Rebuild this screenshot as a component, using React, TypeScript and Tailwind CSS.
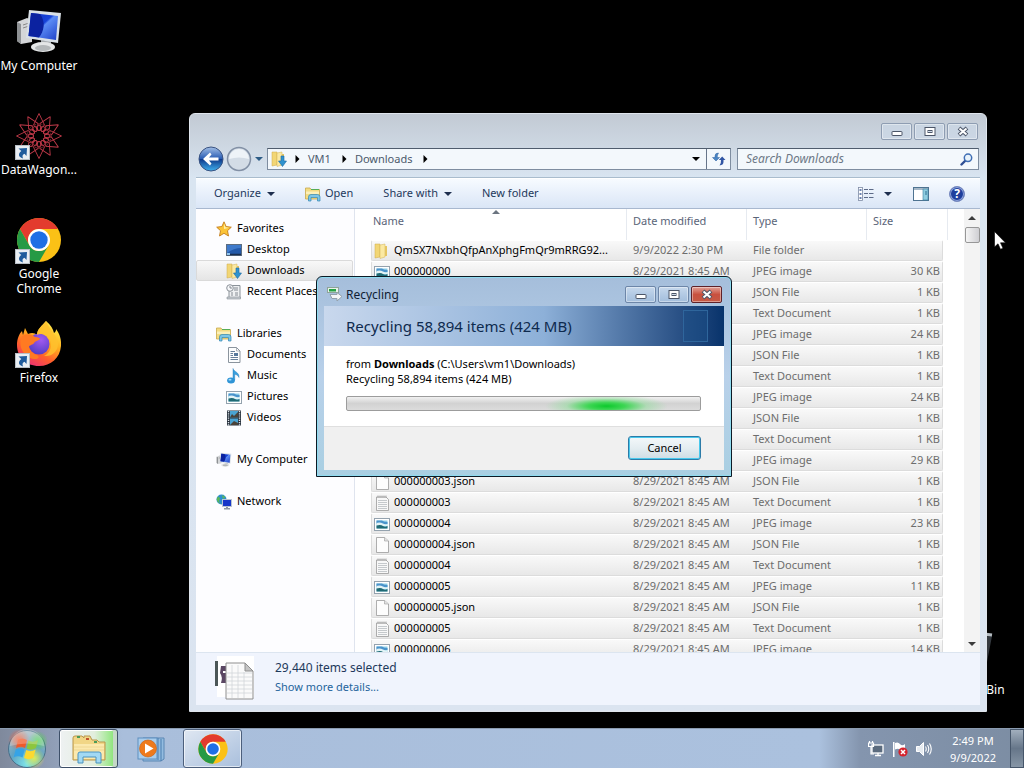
import { useState } from "react";
import type { ReactNode } from "react";

type FileKind = "folder" | "image" | "json" | "text";

interface FileItem {
  name: string;
  modified: string;
  kind: FileKind;
  size: string;
}

const KIND_LABEL: Record<FileKind, string> = {
  folder: "File folder",
  image: "JPEG image",
  json: "JSON File",
  text: "Text Document",
};

// Every photo comes with a .json and a .txt next to it
const IMAGE_SIZES = [30, 24, 24, 29, 23, 11, 14];

const FILES: FileItem[] = [
  { name: "QmSX7NxbhQfpAnXphgFmQr9mRRG92...", modified: "9/9/2022 2:30 PM", kind: "folder", size: "" },
  ...IMAGE_SIZES.flatMap((kb, index): FileItem[] => {
    const name = String(index).padStart(9, "0");
    const modified = "8/29/2021 8:45 AM";
    return [
      { name, modified, kind: "image", size: `${kb} KB` },
      { name: `${name}.json`, modified, kind: "json", size: "1 KB" },
      { name, modified, kind: "text", size: "1 KB" },
    ];
  }),
];

/* ---------- Icons ---------- */

function ComputerIcon({ className }: { className: string }) {
  return (
    <svg viewBox="0 0 48 48" className={className} aria-hidden="true">
      <defs>
        <linearGradient id="screen" x1="0" y1="0" x2="1" y2="1">
          <stop offset="0" stopColor="#0a2fc4" />
          <stop offset="0.45" stopColor="#1743d8" />
          <stop offset="0.5" stopColor="#5b8cf5" />
          <stop offset="1" stopColor="#1d3fc8" />
        </linearGradient>
      </defs>
      <path d="M2 14 12 10 17 12V34L6 36 2 33Z" fill="#d4d6d8" />
      <path d="M2 14 6 16V36L2 33Z" fill="#8e9194" />
      <path d="M8 17 14 15M8 20 14 18" stroke="#888" />
      <path d="M26 32 36 33V40H26Z" fill="#a9adb0" />
      <ellipse cx="28" cy="39" rx="12" ry="5" fill="#e4e6e7" />
      <ellipse cx="28" cy="40" rx="8" ry="3" fill="#b4b8ba" />
      <path d="M14 2 46 5 43 35 11 30Z" fill="#d9e0e6" />
      <path d="M16 5 43 8 41 32 13.500 28Z" fill="url(#screen)" />
      <path d="M16 5 25 6C31 14 29 23 24 29.500L13.500 28Z" fill="#0b22a0" />
    </svg>
  );
}

function ShortcutBadge() {
  return (
    <svg viewBox="0 0 15 15" className="absolute bottom-0 left-0 h-[15px] w-[15px]" aria-hidden="true">
      <rect x="0.500" y="0.500" width="14" height="14" fill="#e9eef3" stroke="#b8bfc6" />
      <path d="M3.500 3.500 12 3 11.500 11 9.500 8.700C7.500 9.500 7 11 8 13.500 3 12 3 8.500 6.300 6Z" fill="#1f5b9c" />
    </svg>
  );
}

function DataWagonIcon() {
  return (
    <svg viewBox="0 0 48 48" className="h-12 w-12" fill="none" stroke="#c23a4a" aria-hidden="true">
      {[0, 30, 60, 90, 120, 150, 180, 210, 240, 270, 300, 330].map((angle) => (
        <g key={angle} transform={`rotate(${angle} 24 24)`}>
          <path d="M24 1.500 29.500 13M24 1.500 18.500 13" strokeWidth="0.900" />
          <path d="M18.500 13 24 19 29.500 13" strokeWidth="0.700" />
          <circle cx="24" cy="16" r="2.600" strokeWidth="0.800" />
        </g>
      ))}
      <circle cx="24" cy="24" r="12" strokeWidth="0.600" strokeDasharray="2 1" />
    </svg>
  );
}

function ChromeIcon({ className }: { className: string }) {
  return (
    <svg viewBox="0 0 48 48" className={className} aria-hidden="true">
      <circle cx="24" cy="24" r="22" fill="#fbc116" />
      <path d="M4.950 13A22 22 0 0 1 43.050 13H24A11 11 0 0 0 14.470 29.500Z" fill="#e33b2e" />
      <path d="M4.950 13A22 22 0 0 0 24 46L33.530 29.500A11 11 0 0 1 14.470 29.500Z" fill="#269a45" />
      <circle cx="24" cy="24" r="11" fill="#fff" />
      <circle cx="24" cy="24" r="8.700" fill="#1f6fe5" />
    </svg>
  );
}

function FirefoxIcon() {
  return (
    <svg viewBox="0 0 48 48" className="h-12 w-12" aria-hidden="true">
      <defs>
        <linearGradient id="fox" x1="0.800" y1="0" x2="0.250" y2="1">
          <stop offset="0" stopColor="#fff04f" />
          <stop offset="0.400" stopColor="#ffb01f" />
          <stop offset="0.700" stopColor="#ff5e2c" />
          <stop offset="1" stopColor="#ec2c7c" />
        </linearGradient>
        <radialGradient id="globe" cx="0.600" cy="0.300" r="0.800">
          <stop offset="0" stopColor="#a259f0" />
          <stop offset="1" stopColor="#4a3bc0" />
        </radialGradient>
      </defs>
      <path
        d="M31 1C36 5 38 9 39 13 41 12 41 10 41 9 45 14 46.500 20 46 26 45 38 36 46 24 46 11 46 2 37 2 25 2 19 4 14 7 11L8 15 10 8 13 14C17 12 20 13 22 15 22 9 27 6 31 1Z"
        fill="url(#fox)"
      />
      <circle cx="24" cy="24" r="10.500" fill="url(#globe)" />
      <path d="M7 16C11 13 17 14 20 17 23 17 25 18 25 19 23 21 20 21 19 23 18 25 14 25 14 27 15 31 18 34 22 35 27 38 20 42 12 36 5 31 4 22 7 16Z" fill="#ff7a22" />
      <path d="M22 15C29 12 36 17 36 25 36 30 33 34 29 36 37 37 43 31 43 24 43 17 36 12 31 1 27 6 22 9 22 15Z" fill="#ffc12e" opacity="0.850" />
    </svg>
  );
}

function RecycleBinIcon() {
  return (
    <svg viewBox="0 0 48 48" className="h-12 w-12" aria-hidden="true">
      <path d="M5 5 43 4 38 30 36 44 12 46Z" fill="#59616a" opacity="0.600" />
      <path d="M5 4Q24 0 43 3" fill="none" stroke="#b6bdc3" strokeWidth="3" />
    </svg>
  );
}

function FolderIcon({ arrow = false }: { arrow?: boolean }) {
  return (
    <svg viewBox="0 0 16 16" className="h-4 w-4 shrink-0" aria-hidden="true">
      <path d="M1 1H6V14L1 15Z" fill="#f2d675" stroke="#cda84a" strokeWidth="0.500" />
      <path d="M6 2 11 1V14L6 15.500Z" fill="#fbe9a2" stroke="#d3b255" strokeWidth="0.500" />
      <path d="M11 3H13V13H11Z" fill="#e5c562" />
      {arrow && <path d="M10 5H13V10H15.500L11.500 15.500 7.500 10H10Z" fill="#2f93cf" stroke="#1b6aa3" strokeWidth="0.600" />}
    </svg>
  );
}

function LibraryIcon() {
  return (
    <svg viewBox="0 0 16 16" className="h-4 w-4 shrink-0" aria-hidden="true">
      <path d="M0.500 13V2H5L6 3.500H14.500V13Z" fill="#f3dc83" stroke="#c9a94d" strokeWidth="0.800" />
      <path d="M1 5.500H14V8H1Z" fill="#fbf0b9" />
      <path d="M6 3.500H14" stroke="#57ad55" />
      <path d="M3.500 15V11Q3.500 8.500 6 8.500H12.500Q15 8.500 15 11V15H12.500V11.500H6V15Z" fill="#7ec6e6" stroke="#3187b5" strokeWidth="0.700" />
    </svg>
  );
}

function ImageIcon() {
  return (
    <svg viewBox="0 0 16 16" className="h-4 w-4 shrink-0" aria-hidden="true">
      <rect x="0.500" y="2.500" width="15" height="12" fill="#fff" stroke="#94a2ae" />
      <rect x="2.500" y="4.500" width="11" height="8" fill="#8fd0e8" />
      <path d="M2.500 4.500H8Q10 6 13.500 6V8H2.500Z" fill="#4a93cb" />
      <path d="M2.500 7Q6 6 9 7.500T13.500 8V10H2.500Z" fill="#e2f3f6" />
      <path d="M2.500 9.500Q7 8.500 9 10T13.500 10V12.500H2.500Z" fill="#1f6a74" />
    </svg>
  );
}

function PageIcon() {
  return (
    <svg viewBox="0 0 16 16" className="h-4 w-4 shrink-0" aria-hidden="true">
      <path d="M2.500 0.500H10.500L14.500 4V15.500H2.500Z" fill="#fdfdfd" stroke="#9a9a9a" strokeWidth="0.800" />
      <path d="M10.500 0.500V4H14.500" fill="#e3e3e3" stroke="#9a9a9a" strokeWidth="0.600" />
    </svg>
  );
}

function NotepadIcon() {
  return (
    <svg viewBox="0 0 16 16" className="h-4 w-4 shrink-0" aria-hidden="true">
      <path d="M2.500 2H12L14.500 4.500V15.500H2.500Z" fill="#f8f8f8" stroke="#9a9a9a" strokeWidth="0.800" />
      <path d="M4 0.500V3M6 0.500V3M8 0.500V3M10 0.500V3M12 0.500V3" stroke="#9a9a9a" strokeWidth="0.800" />
      <path d="M4 5.500H13M4 7.500H13M4 9.500H13M4 11.500H13M4 13.500H13" stroke="#b7bdc0" strokeWidth="0.800" />
    </svg>
  );
}

function StarIcon() {
  return (
    <svg viewBox="0 0 16 16" className="h-4 w-4 shrink-0" aria-hidden="true">
      <path d="M8 0.800 10.100 5.500 15.300 6.200 11.500 9.700 12.500 15 8 12.300 3.500 15 4.500 9.700 0.700 6.200 5.900 5.500Z" fill="#fbc437" stroke="#c47d1c" strokeWidth="0.900" />
      <path d="M8 2.500 9.400 6.300 13 6.800 8 8Z" fill="#fff1a8" />
    </svg>
  );
}

function DesktopIconSmall() {
  return (
    <svg viewBox="0 0 16 16" className="h-4 w-4 shrink-0" aria-hidden="true">
      <rect x="0.500" y="2.500" width="15" height="11" fill="#2459a8" stroke="#5d6d80" />
      <path d="M1 3H15V6Q8 6 1 11Z" fill="#3f7acb" />
      <path d="M1 12.500H15" stroke="#1b2f4f" strokeWidth="1.500" />
      <path d="M1 11H4V13H1Z" fill="#8fc4ee" />
    </svg>
  );
}

function RecentIcon() {
  return (
    <svg viewBox="0 0 16 16" className="h-4 w-4 shrink-0" aria-hidden="true">
      <path d="M5 1.500H14V14H3V7" fill="#eef0f2" stroke="#8b9299" />
      <circle cx="4" cy="4" r="3.300" fill="#f7f8fa" stroke="#8b9299" />
      <path d="M4 2V4H6M8 4H12M8 6H12M5 9H7M9 9H12M5 11H7M9 11H12" stroke="#788089" strokeWidth="0.900" fill="none" />
      <path d="M1 13H14.500V15H1Z" fill="#c5cad0" stroke="#8b9299" strokeWidth="0.600" />
    </svg>
  );
}

function DocumentIcon() {
  return (
    <svg viewBox="0 0 16 16" className="h-4 w-4 shrink-0" aria-hidden="true">
      <path d="M2.500 0.500H10.500L14 4V15.500H2.500Z" fill="#fcfdfe" stroke="#8b949e" />
      <path d="M10.500 0.500V4H14" fill="none" stroke="#8b949e" strokeWidth="0.700" />
      <path d="M4.500 4.500H9M4.500 6.500H7M4.500 8.500H7M4.500 10.500H12M4.500 12.500H12" stroke="#55708f" strokeWidth="0.900" />
      <rect x="8" y="6" width="4" height="3" fill="#56789c" />
    </svg>
  );
}

function MusicIcon() {
  return (
    <svg viewBox="0 0 16 16" className="h-4 w-4 shrink-0" aria-hidden="true">
      <path d="M7 0.500C8 4 13.500 4 13 9.500 12 7 10 6.500 8.700 6.500V12H7Z" fill="#3ba0de" stroke="#1c74b4" strokeWidth="0.400" />
      <ellipse cx="5" cy="12.500" rx="3.900" ry="2.900" fill="#2f94d6" />
      <ellipse cx="4" cy="11.700" rx="1.500" ry="0.900" fill="#a6dbf8" />
    </svg>
  );
}

function VideoIcon() {
  return (
    <svg viewBox="0 0 16 16" className="h-4 w-4 shrink-0" aria-hidden="true">
      <rect x="1" y="0.500" width="14" height="15" fill="#26303c" />
      <path d="M2.500 1V15.500M13.500 1V15.500" stroke="#dfe6ec" strokeWidth="1.400" strokeDasharray="1.200 1" />
      <rect x="4" y="1" width="8" height="6.500" fill="#4aa3d2" />
      <rect x="4" y="8.500" width="8" height="6.500" fill="#4aa3d2" />
      <path d="M4 7.500 6 4 8 6 12 2V7.500ZM4 15 8 11 12 13V15Z" fill="#4a4238" />
    </svg>
  );
}

function NetworkIcon() {
  return (
    <svg viewBox="0 0 16 16" className="h-4 w-4 shrink-0" aria-hidden="true">
      <circle cx="5.500" cy="5.500" r="5" fill="#2f8fce" />
      <path d="M2 2.500Q5 4 3.500 6T5.500 10Q1 9 0.700 5ZM6 1 9.500 3 7 5Z" fill="#59b85a" />
      <rect x="6.500" y="5.500" width="9" height="7" fill="#1737c9" stroke="#b9c4d2" />
      <path d="M10 13H12V14H14V15.500H8V14H10Z" fill="#8e99a6" />
    </svg>
  );
}

function CaretDown({ className = "fill-[#1e2f4f]" }: { className?: string }) {
  return (
    <svg viewBox="0 0 8 4" className={`h-1 w-2 shrink-0 ${className}`} aria-hidden="true">
      <path d="M0 0H8L4 4Z" />
    </svg>
  );
}

function CaretRight() {
  return (
    <svg viewBox="0 0 5 8" className="h-2 w-[5px] shrink-0 fill-black" aria-hidden="true">
      <path d="M0.500 0V8L4.500 4Z" />
    </svg>
  );
}

function FileKindIcon({ kind }: { kind: FileKind }) {
  if (kind === "folder") return <FolderIcon />;
  if (kind === "image") return <ImageIcon />;
  if (kind === "json") return <PageIcon />;
  return <NotepadIcon />;
}

/* ---------- Shared window parts ---------- */

function WindowControls({ active = false }: { active?: boolean }) {
  const base = "flex h-[17px] w-[31px] items-center justify-center rounded-xs border shadow-[inset_0_0_0_1px_rgba(255,255,255,0.4)]";
  const plain = active
    ? "border-[#6d86a8] bg-linear-to-b from-[#c6d8ec] via-[#b3cae4] via-50% to-[#a3bedc]"
    : "border-[#8e9db2] bg-[#ccd9e8]/60";
  return (
    <div className="flex gap-[2px]">
      <button type="button" aria-label="Minimize" className={`${base} ${plain}`}>
        <svg viewBox="0 0 12 11" className="h-[11px] w-3" aria-hidden="true">
          <rect x="1" y="5.500" width="10" height="4" rx="0.500" fill="#fff" stroke="#4c5668" />
        </svg>
      </button>
      <button type="button" aria-label="Maximize" className={`${base} ${plain}`}>
        <svg viewBox="0 0 12 11" className="h-[11px] w-3" aria-hidden="true">
          <rect x="1" y="1.500" width="10" height="8" fill="#fff" stroke="#4c5668" />
          <rect x="4" y="4.500" width="4" height="2" fill="#cfdbe9" stroke="#4c5668" />
        </svg>
      </button>
      <button
        type="button"
        aria-label="Close"
        className={`${base} ${active ? "border-[#5e2129] bg-linear-to-b from-[#e0a097] via-[#c8503f] via-50% to-[#c65a46]" : plain}`}
      >
        <svg viewBox="0 0 12 11" className="h-[11px] w-3" aria-hidden="true">
          <path d="M2 2 10 9M10 2 2 9" stroke="#4c5668" strokeWidth="4" />
          <path d="M2.500 2.400 9.500 8.600M9.500 2.400 2.500 8.600" stroke="#fff" strokeWidth="2" />
        </svg>
      </button>
    </div>
  );
}

/* ---------- Desktop ---------- */

function DesktopShortcut({ label, shortcut = false, children }: { label: string; shortcut?: boolean; children: ReactNode }) {
  return (
    <button type="button" className="flex h-[104px] w-[78px] flex-col items-center pt-2">
      <span className="relative block h-12 w-12">
        {children}
        {shortcut && <ShortcutBadge />}
      </span>
      <span className="mt-[2px] text-center text-xs leading-[15px] text-white">{label}</span>
    </button>
  );
}

/* ---------- Explorer ---------- */

function TreeItem({ icon, label, child = false, selected = false }: { icon: ReactNode; label: string; child?: boolean; selected?: boolean }) {
  return (
    <li>
      <a
        href="#"
        className={`flex h-[21px] items-center gap-[5px] border whitespace-nowrap ${child ? "pl-[29px]" : "pl-[19px]"} ${
          selected ? "rounded-xs border-[#dadada] bg-linear-to-b from-[#f8f8f8] to-[#e5e5e5]" : "border-transparent"
        }`}
      >
        {icon}
        {label}
      </a>
    </li>
  );
}

function NavigationPane() {
  return (
    <nav aria-label="Folders" className="w-[159px] shrink-0 overflow-hidden border-r border-[#dfe4ee] bg-[#fdfdff] pt-[9px] pr-px text-black">
      <ul className="mb-[21px]">
        <TreeItem icon={<StarIcon />} label="Favorites" />
        <TreeItem icon={<DesktopIconSmall />} label="Desktop" child />
        <TreeItem icon={<FolderIcon arrow />} label="Downloads" child selected />
        <TreeItem icon={<RecentIcon />} label="Recent Places" child />
      </ul>
      <ul className="mb-[21px]">
        <TreeItem icon={<LibraryIcon />} label="Libraries" />
        <TreeItem icon={<DocumentIcon />} label="Documents" child />
        <TreeItem icon={<MusicIcon />} label="Music" child />
        <TreeItem icon={<ImageIcon />} label="Pictures" child />
        <TreeItem icon={<VideoIcon />} label="Videos" child />
      </ul>
      <ul className="mb-[21px]">
        <TreeItem icon={<ComputerIcon className="h-4 w-4 shrink-0" />} label="My Computer" />
      </ul>
      <ul>
        <TreeItem icon={<NetworkIcon />} label="Network" />
      </ul>
    </nav>
  );
}

function FileTable() {
  const th = "relative h-[31px] pb-[6px] font-normal";
  const td = "h-[21px] border-y border-t-white border-b-[#dcdcdc] bg-linear-to-b from-[#f9f9f9] to-[#e8e8e8] whitespace-nowrap";
  return (
    <table className="ml-4 w-full table-fixed border-separate border-spacing-0 text-left text-[#6d6d6d]">
      <colgroup>
        <col />
        <col className="w-[120px]" />
        <col className="w-[120px]" />
        <col className="w-[76px]" />
        <col className="w-[5px]" />
      </colgroup>
      <thead className="text-[#5a6478]">
        <tr>
          <th scope="col" className={`${th} border-r border-[#e6eaf0] pl-[2px]`}>
            <svg viewBox="0 0 8 4" className="absolute top-px right-[126px] h-1 w-2 fill-[#6b7480]" aria-hidden="true">
              <path d="M0 4 4 0 8 4Z" />
            </svg>
            Name
          </th>
          <th scope="col" className={`${th} border-r border-[#e6eaf0] pl-[6px]`}>Date modified</th>
          <th scope="col" className={`${th} border-r border-[#e6eaf0] pl-[6px]`}>Type</th>
          <th scope="col" className={`${th} pl-[6px]`}>Size</th>
          <td className="border-r border-[#e6eaf0]" />
        </tr>
      </thead>
      <tbody>
        {FILES.map((file) => (
          <tr key={`${file.name}-${file.kind}`}>
            <td className={`${td} rounded-l-xs border-l border-l-[#dcdcdc] pl-[2px]`}>
              <span className="flex items-center gap-1 text-black">
                <FileKindIcon kind={file.kind} />
                {file.name}
              </span>
            </td>
            <td className={`${td} pl-[6px]`}>{file.modified}</td>
            <td className={`${td} pl-[6px]`}>{KIND_LABEL[file.kind]}</td>
            <td className={`${td} rounded-r-xs border-r border-r-[#dcdcdc] pr-[2px] text-right`}>{file.size}</td>
            <td />
          </tr>
        ))}
      </tbody>
    </table>
  );
}

function CommandBar() {
  return (
    <div className="flex h-[31px] shrink-0 items-center border-y border-t-white border-b-[#a8b8cf] bg-linear-to-b from-[#f7fbff] via-[#e8f0fb] via-50% to-[#dae6f6] pr-[15px] pl-[18px] text-[#1e395b]">
      <button type="button" className="flex items-center gap-[6px]">
        Organize <CaretDown />
      </button>
      <button type="button" className="ml-[30px] flex items-center gap-1">
        <LibraryIcon /> Open
      </button>
      <button type="button" className="ml-[30px] flex items-center gap-[6px]">
        Share with <CaretDown />
      </button>
      <button type="button" className="ml-[30px]">New folder</button>
      <div className="ml-auto flex items-center">
        <button type="button" aria-label="Change your view" className="flex items-center gap-[10px]">
          <svg viewBox="0 0 16 14" className="h-[14px] w-4" aria-hidden="true">
            <rect x="0.500" y="0.500" width="4" height="13" fill="#fff" stroke="#7d8ba5" strokeWidth="0.800" />
            <path d="M1.500 3H3.500M1.500 7H3.500M1.500 11H3.500" stroke="#3b5b98" strokeWidth="1.400" />
            <path d="M6 2.500H10M11 2.500H15.500M6 6.500H10M11 6.500H15.500M6 10.500H10M11 10.500H15.500" stroke="#5d6b88" />
          </svg>
          <CaretDown />
        </button>
        <button type="button" aria-label="Show the preview pane" className="ml-[21px]">
          <svg viewBox="0 0 16 14" className="h-[14px] w-4" aria-hidden="true">
            <rect x="0.500" y="0.500" width="15" height="13" fill="#fff" stroke="#4e7391" />
            <path d="M1 2H15" stroke="#4e7391" />
            <rect x="10" y="2" width="5" height="11" fill="#8fcde0" stroke="#3a7fa0" strokeWidth="0.600" />
            <path d="M13 4V8" stroke="#2d6f92" />
          </svg>
        </button>
        <button
          type="button"
          aria-label="Get help"
          className="ml-5 h-4 w-4 rounded-full border border-[#7a8cc0] bg-[#1f3f9d] text-center text-xs leading-[14px] font-bold text-white shadow-[inset_0_0_0_1px_#8fa5dc]"
        >
          ?
        </button>
      </div>
    </div>
  );
}

function AddressRow() {
  const [query, setQuery] = useState("");
  return (
    <div className="flex h-[26px] shrink-0 items-center pr-px pl-[2px] text-[#4c5a6c]">
      <button type="button" aria-label="Back">
        <svg viewBox="0 0 26 26" className="h-[26px] w-[26px]" aria-hidden="true">
          <defs>
            <linearGradient id="back" x1="0" y1="0" x2="0" y2="1">
              <stop offset="0" stopColor="#a3bfe6" />
              <stop offset="0.480" stopColor="#2a5db4" />
              <stop offset="0.500" stopColor="#0d3688" />
              <stop offset="1" stopColor="#3fb0ee" />
            </linearGradient>
          </defs>
          <circle cx="13" cy="13" r="12" fill="url(#back)" stroke="#3a5381" />
          <path d="M5 13 12 6.500 13.500 8.500 11 11.500H20.500V14.500H11L13.500 17.500 12 19.500Z" fill="#fff" />
        </svg>
      </button>
      <button type="button" aria-label="Forward" className="ml-[2px]">
        <svg viewBox="0 0 26 26" className="h-[26px] w-[26px]" aria-hidden="true">
          <circle cx="13" cy="13" r="11.500" fill="#d3dce6" stroke="#8290a5" strokeWidth="1.500" />
          <path d="M3 13A10 10 0 0 1 23 13Q13 10 3 13Z" fill="#eef3f8" />
        </svg>
      </button>
      <button type="button" aria-label="Recent pages" className="ml-[3px]">
        <CaretDown className="fill-[#2c5c86]" />
      </button>
      <div className="ml-1 flex h-[22px] min-w-0 flex-1 items-center border border-[#7e8da0] border-t-[#4f5c6d] bg-[#f3f8fc]">
        <nav aria-label="Address" className="flex flex-1 items-center gap-2 pl-[3px]">
          <FolderIcon arrow />
          <CaretRight />
          <a href="#" className="pr-[3px]">VM1</a>
          <CaretRight />
          <a href="#" className="pr-[3px]">Downloads</a>
          <CaretRight />
        </nav>
        <button type="button" aria-label="Previous locations" className="px-[6px]">
          <CaretDown className="fill-black" />
        </button>
        <button type="button" aria-label="Refresh" className="flex h-full w-6 items-center justify-center border-l border-[#66758a]">
          <svg viewBox="0 0 14 14" className="h-[14px] w-[14px]" aria-hidden="true">
            <path d="M6.500 1Q3 1 3 4V5.500H0.500L4 9 7.500 5.500H5.200Q5 3 6.500 1Z" fill="#4a86c5" stroke="#2d5f9e" strokeWidth="0.500" />
            <path d="M7.500 13.500Q11.500 13 11.500 10V8H13.500L10.200 4.500 6.800 8H9Q9.300 11.500 7.500 13.500Z" fill="#3156a4" />
          </svg>
        </button>
      </div>
      <label className="ml-[6px] flex h-[22px] w-[242px] items-center border border-[#7e8da0] border-t-[#4f5c6d] bg-[#f3f8fc] pr-[5px] pl-2">
        <input
          type="search"
          aria-label="Search Downloads"
          placeholder="Search Downloads"
          value={query}
          onChange={(e) => setQuery(e.target.value)}
          className="min-w-0 flex-1 bg-transparent text-xs outline-none placeholder:text-[#6d7887] placeholder:italic"
        />
        <svg viewBox="0 0 13 13" className="h-[13px] w-[13px]" fill="none" aria-hidden="true">
          <path d="M6 7 1.500 11.500" stroke="#2f4f94" strokeWidth="2.400" strokeLinecap="round" />
          <circle cx="8" cy="4.800" r="3.700" fill="#e8f3fb" stroke="#3f6eb4" strokeWidth="1.500" />
        </svg>
      </label>
    </div>
  );
}

function ExplorerWindow() {
  return (
    <section
      aria-label="Downloads"
      className="absolute top-[113px] right-[37px] bottom-4 left-[189px] flex flex-col rounded-t-md border border-[#dfe5ec] bg-linear-to-b from-[#c2cad4] via-[#d9e5f1] via-[64px] to-[#dbe4f0] px-[6px] pb-[6px] text-[11px]"
    >
      <div className="flex h-8 shrink-0 justify-end pt-[9px] pr-[2px]">
        <WindowControls />
      </div>
      <AddressRow />
      <div className="mt-[5px] flex min-h-0 flex-1 flex-col border-t border-[#a9bccd] bg-white">
        <CommandBar />
        <div className="flex min-h-0 flex-1">
          <NavigationPane />
          <div className="min-w-0 flex-1 overflow-hidden pr-8">
            <FileTable />
          </div>
          <div className="flex w-4 shrink-0 flex-col items-center bg-[#f3f3f3] pt-[7px] pb-[6px]">
            <svg viewBox="0 0 8 4" className="h-1 w-2 fill-[#3c3c3c]" aria-hidden="true">
              <path d="M0 4 4 0 8 4Z" />
            </svg>
            <div className="mt-[7px] h-4 w-[15px] rounded-xs border border-[#979797] bg-linear-to-r from-[#f5f5f5] to-[#cfcfd3]" />
            <svg viewBox="0 0 8 4" className="mt-auto h-1 w-2 fill-[#3c3c3c]" aria-hidden="true">
              <path d="M0 0H8L4 4Z" />
            </svg>
          </div>
        </div>
        <footer className="flex h-[53px] shrink-0 border-t border-[#dce5f0] bg-[#f0f4fd] pl-[18px]">
          <svg viewBox="0 0 44 48" className="h-12 w-11" aria-hidden="true">
            <path d="M3 3H40V44H3Z" fill="#fff" />
            <path d="M1 8H4V33H1Z" fill="#4b5657" />
            <path d="M7 13H13V18H9V20H12V30H7Q9 24 6 20Z" fill="#5a4663" />
            <path d="M12 10H31L39 18V46H12Z" fill="#fafafa" stroke="#8e8e8e" />
            <path d="M31 10V18H39Z" fill="#c4c4c4" stroke="#8e8e8e" />
            <path d="M13 20H38M13 24H38M13 28H38M13 32H38M13 36H38M13 40H38M18 12V45M24 12V45M30 19V45" stroke="#d2d5d9" strokeWidth="0.800" />
          </svg>
          <div className="ml-[17px] pt-[5px]">
            <p className="text-xs leading-[19px] text-[#1e395b]">29,440 items selected</p>
            <a href="#" className="block leading-[19px] text-[#25649c]">Show more details...</a>
          </div>
        </footer>
      </div>
    </section>
  );
}

/* ---------- Dialog ---------- */

function RecyclingDialog() {
  return (
    <section
      role="dialog"
      aria-label="Recycling"
      className="absolute top-[276px] left-[316px] w-[416px] rounded-t-md border border-[#0d1a26] bg-linear-to-b from-[#a5bedb] via-[#b9d1ea] to-[#a9cfe2] px-[7px] pb-[6px] text-[11px] shadow-[inset_0_0_0_1px_#8fdcf0]"
    >
      <div className="flex h-[29px] items-start pr-[2px] pl-[3px]">
        <svg viewBox="0 0 16 16" className="mt-[9px] h-4 w-4" aria-hidden="true">
          <rect x="0.500" y="1.500" width="11" height="5" fill="#e9f3ea" stroke="#8fa39a" />
          <rect x="2" y="3" width="7" height="2.500" fill="#25a344" />
          <path d="M3 8.500H10V6.500L15 10.500 10 15V12.500H5Z" fill="#f4f6f7" stroke="#93a0aa" />
        </svg>
        <h2 className="mt-[9px] ml-[3px] text-xs leading-[18px] text-[#101d33]">Recycling</h2>
        <div className="mt-[9px] ml-auto">
          <WindowControls active />
        </div>
      </div>
      <header className="flex h-10 items-center justify-between bg-linear-to-r from-[#c9d8ed] via-[#8db0d8] via-55% to-[#08336b] pr-4 pl-[22px]">
        <h1 className="text-[15px] text-[#0e2a4e]">Recycling 58,894 items (424 MB)</h1>
        <span className="h-8 w-[25px] border border-[#2f669c] bg-[#1c4f88]/50" />
      </header>
      <div className="bg-white pt-[10px] pr-[23px] pb-[15px] pl-[22px] leading-[15px] text-black">
        <p>
          from <strong>Downloads</strong> (C:\Users\vm1\Downloads)
        </p>
        <p>Recycling 58,894 items (424 MB)</p>
        <div
          role="progressbar"
          aria-label="Recycling progress"
          className="mt-[10px] h-[15px] overflow-hidden rounded-xs border border-[#9c9c9c] bg-linear-to-b from-[#f1f1f1] via-[#d2d2d2] via-50% to-[#dcdcdc]"
        >
          <div className="ml-[56%] h-full w-[35%] bg-[radial-gradient(ellipse_50%_90%_at_50%_70%,#0cc92c,#3ed654_30%,#8ade9680_65%,transparent)]" />
        </div>
      </div>
      <footer className="flex justify-end border-t border-[#dfdfdf] bg-[#f0f0f0] pt-[9px] pr-[23px] pb-[10px]">
        <button
          type="button"
          className="h-6 w-[73px] rounded-[3px] border border-[#2c7ba8] bg-linear-to-b from-[#f4f8fa] via-[#e4edf1] via-50% to-[#cfdde4] text-black shadow-[inset_0_0_0_1px_#48c8ec]"
        >
          Cancel
        </button>
      </footer>
    </section>
  );
}

/* ---------- Taskbar ---------- */

function StartOrb() {
  return (
    <svg viewBox="0 0 40 40" className="h-10 w-10" aria-hidden="true">
      <defs>
        <radialGradient id="orb-base" cx="0.500" cy="0.900" r="0.900">
          <stop offset="0" stopColor="#7fe6ea" />
          <stop offset="0.500" stopColor="#5fa3c4" />
          <stop offset="1" stopColor="#a9b8c0" />
        </radialGradient>
        <radialGradient id="orb-red">
          <stop offset="0" stopColor="#ff5a2e" stopOpacity="0.900" />
          <stop offset="1" stopColor="#ff5a2e" stopOpacity="0" />
        </radialGradient>
        <radialGradient id="orb-green">
          <stop offset="0" stopColor="#4fd64b" stopOpacity="0.900" />
          <stop offset="1" stopColor="#4fd64b" stopOpacity="0" />
        </radialGradient>
        <radialGradient id="orb-yellow">
          <stop offset="0" stopColor="#e9f04a" stopOpacity="0.900" />
          <stop offset="1" stopColor="#e9f04a" stopOpacity="0" />
        </radialGradient>
      </defs>
      <circle cx="20" cy="20" r="18.500" fill="url(#orb-base)" stroke="#48708a" />
      <circle cx="12" cy="11" r="11" fill="url(#orb-red)" />
      <circle cx="31" cy="12" r="10" fill="url(#orb-green)" />
      <circle cx="27" cy="29" r="11" fill="url(#orb-yellow)" />
      <path d="M11 11Q15 8 20 11L18 19Q14 16.500 9 19Z" fill="#f0592a" />
      <path d="M21.500 11.500Q26 14 31 11L29 19Q24 22 19.500 19.500Z" fill="#8cc63e" />
      <path d="M8.700 20.500Q13 18 17.700 20.500L15.500 28.500Q11 26 6.500 28.500Z" fill="#35a3e6" />
      <path d="M19.200 21Q24 23.500 28.600 20.500L26.500 28.500Q22 31.500 17 29Z" fill="#fcd931" />
      <path d="M3 17A17 17 0 0 1 37 17Q20 12 3 17Z" fill="#fff" opacity="0.250" />
    </svg>
  );
}

function Taskbar() {
  const task = "flex h-[39px] items-center justify-center rounded-[3px] border";
  return (
    <footer className="flex h-10 shrink-0 items-center border-t border-[#8a9bb0] bg-[linear-gradient(to_right,#7f899c,#8f9db5_5%,#a9bedb_12%,#abc1de_80%,#8495ae_84%,#7c8da3)]">
      <button type="button" aria-label="Start" className="ml-[7px]">
        <StartOrb />
      </button>
      <button
        type="button"
        aria-label="Windows Explorer"
        className={`${task} ml-3 w-[59px] border-[#3d4f68] bg-linear-to-r from-[#eef1f2] via-[#e2eedd] via-60% to-[#7be366] shadow-[inset_-4px_0_0_#c4d8c6,inset_0_0_0_1px_#fff]`}
      >
        <svg viewBox="0 0 34 30" className="h-[30px] w-[34px]" aria-hidden="true">
          <path d="M1 26V4Q1 2 3 2H10L12 4V2H18L20 6H25L27 8H33V26Z" fill="#f1d686" stroke="#b9964c" />
          <path d="M2 10H32V25H2Z" fill="#fbe9ae" />
          <path d="M5 3H8M22 8H25" stroke="#4b9b58" strokeWidth="2" />
          <path d="M14 5H17" stroke="#c2542f" strokeWidth="2" />
          <path d="M2 13H32M2 16H32" stroke="#e7cf82" strokeWidth="0.600" />
          <path d="M6 29V20Q6 18 8 18H27Q29 18 29 20V29H24V23H11V29Z" fill="#a2d9f3" stroke="#4b93bf" />
        </svg>
      </button>
      <button type="button" aria-label="Windows Media Player" className="ml-[17px] flex w-8 justify-center">
        <svg viewBox="0 0 28 26" className="h-[26px] w-7" aria-hidden="true">
          <path d="M6 2H27V23L24 25H6Z" fill="#93bce0" stroke="#5a87b4" />
          <path d="M24 3V25M21 2V24" stroke="#4b7cae" />
          <rect x="1" y="2" width="19" height="21" fill="#a9cdec" stroke="#5e8fbf" />
          <circle cx="11" cy="12.500" r="8.500" fill="#ee7a1c" stroke="#c75f10" strokeWidth="0.600" />
          <path d="M8 7.500V17.500L16.500 12.500Z" fill="#fff" />
        </svg>
      </button>
      <button
        type="button"
        aria-label="Google Chrome"
        className={`${task} ml-4 w-[59px] border-[#4c5f7c] bg-linear-to-br from-[#dfe7f2] to-[#a9bfdc] shadow-[inset_0_0_0_1px_rgba(255,255,255,0.6)]`}
      >
        <ChromeIcon className="h-8 w-8" />
      </button>
      <div className="ml-auto flex h-full items-center">
        <svg viewBox="0 0 16 16" className="h-4 w-4" fill="none" aria-hidden="true">
          <rect x="4" y="4" width="11" height="8" fill="#5b6b7e" stroke="#fff" strokeWidth="1.300" />
          <path d="M7 14.500H13M10 12V14.500" stroke="#fff" strokeWidth="1.300" />
          <path d="M0.500 2H5.500V5.500H0.500ZM1.500 0V2M4.500 0V2M3 5.500V13H6" stroke="#fff" strokeWidth="1.200" />
        </svg>
        <svg viewBox="0 0 16 16" className="ml-2 h-4 w-4" aria-hidden="true">
          <path d="M1 1H2.500V16H1Z" fill="#fff" />
          <path d="M3 2Q6 0.500 8 3T13 3V9Q10 10 8 8.500T3 8.500Z" fill="#fff" />
          <circle cx="11" cy="11" r="4.600" fill="#d4232d" />
          <path d="M9 9 13 13M13 9 9 13" stroke="#fff" strokeWidth="1.500" />
        </svg>
        <svg viewBox="0 0 16 16" className="ml-2 h-4 w-4" fill="none" aria-hidden="true">
          <path d="M0.500 5.500H3.500L7.500 1.500V14.500L3.500 10.500H0.500Z" fill="#e6ebf0" stroke="#fff" />
          <path d="M9.500 5.500Q11 8 9.500 10.500M11.500 4Q14 8 11.500 12M13.500 2.500Q17 8 13.500 13.500" stroke="#fff" strokeWidth="1.100" />
        </svg>
        <button type="button" className="w-[78px] pl-1 text-center text-[11px] leading-[17px] text-white">
          <time dateTime="2022-09-09T14:49" className="block">2:49 PM</time>
          <span className="block">9/9/2022</span>
        </button>
        <button
          type="button"
          aria-label="Show desktop"
          className="h-full w-[14px] border border-[#46566a] bg-linear-to-b from-[#a2afbd] via-[#667689] to-[#8796a6]"
        />
      </div>
    </footer>
  );
}

export default function App() {
  return (
    <div className="flex h-screen flex-col overflow-hidden bg-black font-['Noto_Sans','Open_Sans',sans-serif] text-xs">
      <main className="relative min-h-0 flex-1">
        <div className="flex flex-col items-start">
          <DesktopShortcut label="My Computer">
            <ComputerIcon className="h-12 w-12" />
          </DesktopShortcut>
          <DesktopShortcut label="DataWagon..." shortcut>
            <DataWagonIcon />
          </DesktopShortcut>
          <DesktopShortcut label="Google Chrome" shortcut>
            <ChromeIcon className="h-12 w-12" />
          </DesktopShortcut>
          <DesktopShortcut label="Firefox" shortcut>
            <FirefoxIcon />
          </DesktopShortcut>
        </div>
        <div className="absolute right-3 bottom-0">
          <DesktopShortcut label="Recycle Bin">
            <RecycleBinIcon />
          </DesktopShortcut>
        </div>
        <ExplorerWindow />
        <RecyclingDialog />
        <svg viewBox="0 0 12 19" className="pointer-events-none absolute top-[231px] left-[994px] h-[19px] w-3" aria-hidden="true">
          <path d="M0.500 0.500V16L4 12.800 6.500 18.300 9 17.200 6.500 11.800H11.500Z" fill="#fff" stroke="#000" strokeWidth="0.600" />
        </svg>
      </main>
      <Taskbar />
    </div>
  );
}
